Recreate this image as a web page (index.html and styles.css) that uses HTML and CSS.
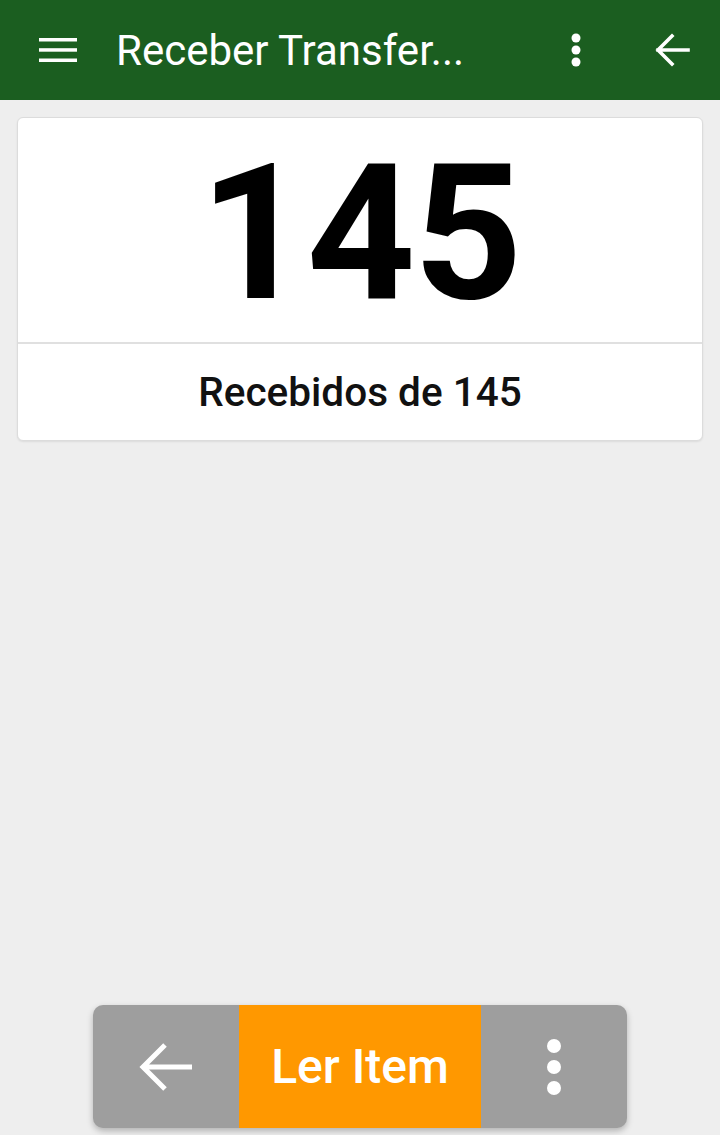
FILE: index.html
```html
<!DOCTYPE html>
<html>
<head>
  <meta charset="UTF-8">
  <title>Receber Transferência</title>
  <link rel="stylesheet" href="styles.css">
</head>
<body>
  <header class="toolbar">
    <button class="icon-btn menu-btn" aria-label="Menu">
      <svg width="38" height="26" viewBox="0 0 38 26">
        <rect x="0" y="1" width="38" height="3.5" fill="#fff"/>
        <rect x="0" y="11.2" width="38" height="3.5" fill="#fff"/>
        <rect x="0" y="21.5" width="38" height="3.5" fill="#fff"/>
      </svg>
    </button>
    <h1 class="title">Receber Transfer...</h1>
    <button class="icon-btn more-btn" aria-label="Mais">
      <svg width="10" height="34" viewBox="0 0 10 34">
        <circle cx="5" cy="5" r="4.5" fill="#fff"/>
        <circle cx="5" cy="17" r="4.5" fill="#fff"/>
        <circle cx="5" cy="29" r="4.5" fill="#fff"/>
      </svg>
    </button>
    <button class="icon-btn back-btn" aria-label="Voltar">
      <svg width="36" height="34" viewBox="0 0 36 34">
        <path d="M34 17 H4 M18 3 L4 17 L18 31" fill="none" stroke="#fff" stroke-width="3.6" stroke-linecap="square"/>
      </svg>
    </button>
  </header>

  <main class="content">
    <div class="counter-card">
      <div class="counter-value">145</div>
      <div class="counter-label">Recebidos de 145</div>
    </div>
  </main>

  <div class="action-bar">
    <button class="action-side" aria-label="Voltar">
      <svg width="58" height="54" viewBox="0 0 58 54">
        <path d="M55 27 H6 M28 5 L6 27 L28 49" fill="none" stroke="#fff" stroke-width="5"/>
      </svg>
    </button>
    <button class="action-main">Ler Item</button>
    <button class="action-side" aria-label="Mais">
      <svg width="16" height="58" viewBox="0 0 16 58">
        <circle cx="8" cy="8" r="7" fill="#fff"/>
        <circle cx="8" cy="29" r="7" fill="#fff"/>
        <circle cx="8" cy="50" r="7" fill="#fff"/>
      </svg>
    </button>
  </div>
</body>
</html>
```

FILE: styles.css
```css
* {
  margin: 0;
  padding: 0;
  box-sizing: border-box;
}
body {
  font-family: Roboto, "Noto Sans", sans-serif;
  background: #eeeeee;
  height: 1135px;
  display: flex;
  flex-direction: column;
  overflow: hidden;
}
button {
  border: none;
  background: none;
  font-family: inherit;
  cursor: pointer;
}

/* Top toolbar */
.toolbar {
  height: 100px;
  background: #1b5e20;
  display: flex;
  align-items: center;
  flex-shrink: 0;
}
.icon-btn {
  display: flex;
  align-items: center;
  justify-content: center;
}
.menu-btn {
  margin-left: 39px;
  width: 38px;
}
.title {
  margin-left: 39px;
  font-size: 42px;
  font-weight: 400;
  color: #fff;
  white-space: nowrap;
  flex: 1;
}
.more-btn {
  width: 10px;
  margin-right: 73px;
}
.back-btn {
  width: 36px;
  margin-right: 30px;
}

/* Counter card */
.content {
  flex: 1;
  padding: 17px 17px 0;
}
.counter-card {
  background: #fff;
  border-radius: 6px;
  border: 1px solid #dcdcdc;
  box-shadow: 0 1px 2px rgba(0, 0, 0, 0.08);
}
.counter-value {
  height: 226px;
  border-bottom: 2px solid #e0e0e0;
  display: flex;
  align-items: center;
  justify-content: center;
  font-size: 190px;
  font-weight: 700;
  color: #000;
  letter-spacing: -2px;
  line-height: 1;
  padding-top: 6px;
}
.counter-label {
  height: 96px;
  display: flex;
  align-items: center;
  justify-content: center;
  font-size: 40.5px;
  font-weight: 500;
  color: #111;
}

/* Bottom action bar */
.action-bar {
  display: flex;
  align-self: center;
  width: 534px;
  height: 123px;
  margin-bottom: 7px;
  border-radius: 10px;
  overflow: hidden;
  background: #9e9e9e;
  box-shadow: 0 3px 6px rgba(0, 0, 0, 0.25);
  flex-shrink: 0;
}
.action-side {
  width: 146px;
  display: flex;
  align-items: center;
  justify-content: center;
}
.action-main {
  flex: 1;
  background: #ff9800;
  color: #fff;
  font-size: 48px;
  font-weight: 500;
}
```
